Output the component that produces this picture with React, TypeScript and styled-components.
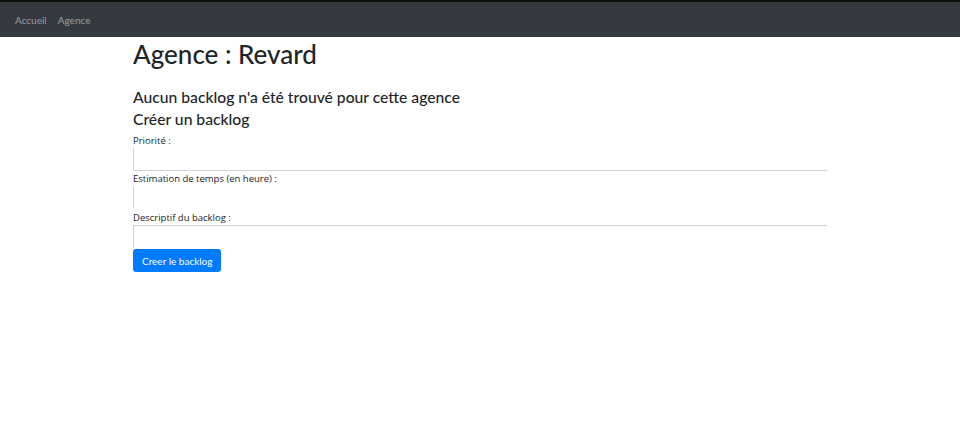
import React from "react";
import styled, { createGlobalStyle } from "styled-components";

const Global = createGlobalStyle`
  html, body { margin: 0; padding: 0; background: #fff; }
  body { font-family: Lato, "Open Sans", Arial, sans-serif; color: #212529; }
  * { box-sizing: border-box; }
`;

const Navbar = styled.nav`
  height: 37px;
  background: #343a40;
  border-top: 2px solid #111;
  display: flex;
  align-items: center;
  gap: 11px;
  padding: 0 0 0 15px;
`;

const NavLink = styled.a`
  font-size: 10px;
  color: rgba(255, 255, 255, 0.5);
  text-decoration: none;
`;

const Container = styled.main`
  width: 694px;
  margin-left: 133px;
  display: flex;
  flex-direction: column;
`;

const Title = styled.h1`
  margin: 0;
  font-size: 26px;
  font-weight: 500;
  line-height: 32px;
  margin-top: 1px;
`;

const SubTitle = styled.h4<{ $mt: number }>`
  margin: 0;
  font-size: 15.7px;
  font-weight: 500;
  line-height: 22px;
  margin-top: ${(p) => p.$mt}px;
`;

const Label = styled.label<{ $h: number }>`
  display: flex;
  align-items: flex-end;
  font-family: "Open Sans", Arial, sans-serif;
  font-size: 9.5px;
  line-height: 12px;
  height: ${(p) => p.$h}px;
  padding-bottom: 1px;
`;

type Side = { $top?: boolean; $bottom?: boolean };

const Input = styled.input<Side>`
  display: block;
  width: 694px;
  height: 23px;
  margin: 0;
  padding: 0 4px;
  border: none;
  border-left: 1px solid #cfd2d8;
  border-top: 1px solid ${(p) => (p.$top ? "#cfd2d8" : "transparent")};
  border-bottom: 1px solid ${(p) => (p.$bottom ? "#cfd2d8" : "transparent")};
  background: #fff;
  outline: none;
`;

const Button = styled.button`
  align-self: flex-start;
  margin-top: 1px;
  height: 23px;
  padding: 0 9px;
  border: none;
  border-radius: 3px;
  background: #007bff;
  color: #fff;
  font-family: inherit;
  font-size: 10px;
`;

export default function App() {
  return (
    <>
      <Global />
      <Navbar>
        <NavLink href="#">Accueil</NavLink>
        <NavLink href="#">Agence</NavLink>
      </Navbar>
      <Container>
        <Title>Agence : Revard</Title>
        <SubTitle $mt={16}>Aucun backlog n'a été trouvé pour cette agence</SubTitle>
        <SubTitle $mt={0}>Créer un backlog</SubTitle>
        <Label $h={18}>Priorité :</Label>
        <Input $bottom />
        <Label $h={15}>Estimation de temps (en heure) :</Label>
        <Input />
        <Label $h={16}>Descriptif du backlog :</Label>
        <Input $top />
        <Button>Creer le backlog</Button>
      </Container>
    </>
  );
}
